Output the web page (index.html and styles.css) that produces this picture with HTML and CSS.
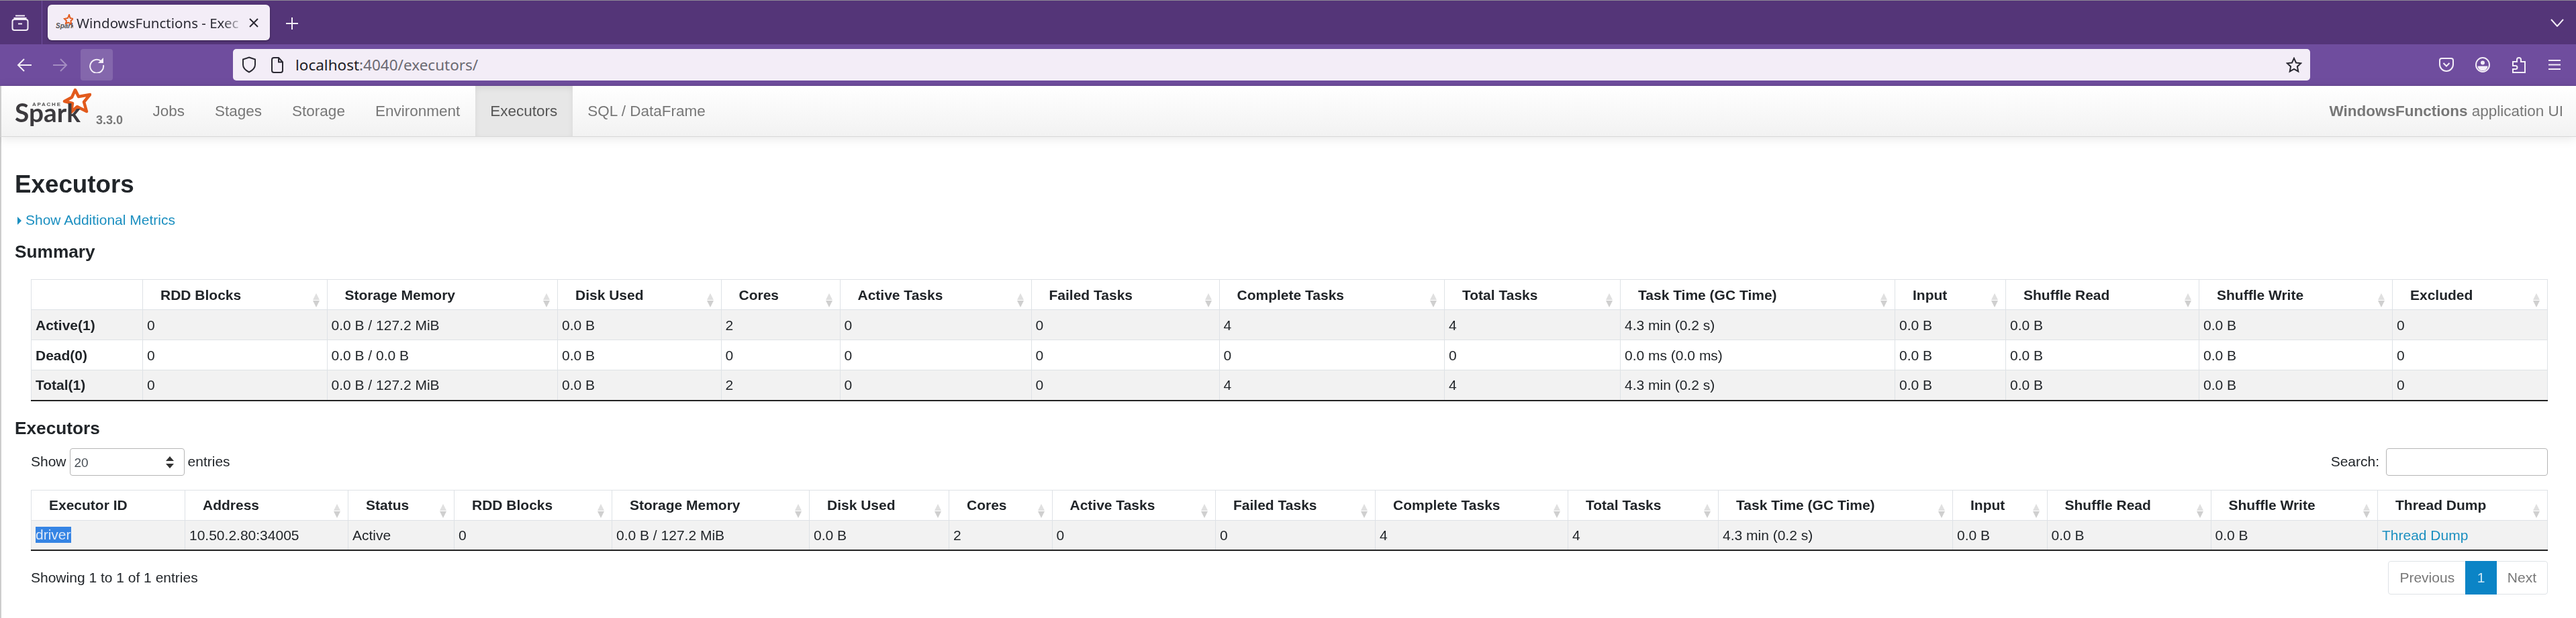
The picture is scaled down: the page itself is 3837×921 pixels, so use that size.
FILE: index.html
```html
<!DOCTYPE html>
<html lang="en">
<head>
    <meta charset="UTF-8">
    <title>WindowsFunctions - Executors</title>
    <link rel="stylesheet" href="styles.css">
</head>
<body>
<header class="browser">
    <div class="tabbar">
        <div class="tabs-btn">
            <svg width="26" height="24" viewBox="0 0 26 24" fill="none" stroke="#f3edf7" stroke-width="2"><path d="M6 1.500h14M3.500 5h19"/><rect x="1.500" y="7" width="23" height="16" rx="3"/><path d="M10 13.500h6"/></svg>
        </div>
        <div class="tab">
            <svg class="favicon" width="26" height="26" viewBox="0 0 26 26"><polygon points="20,1 21.500,6 26,7 22.500,10 23,15 19,12.500 15,14 16,10 13,7 18,6" fill="none" stroke="#e25a1c" stroke-width="2"/><text x="0" y="21" class="favicon-text">Spark</text></svg>
            <span class="tab-title">WindowsFunctions - Exec</span>
            <svg width="14" height="14" viewBox="0 0 14 14" stroke="#2b2a33" stroke-width="2"><path d="M1 1l12 12M13 1L1 13"/></svg>
        </div>
        <svg class="new-tab" width="18" height="18" viewBox="0 0 18 18" stroke="#f3edf7" stroke-width="2"><path d="M9 0v18M0 9h18"/></svg>
        <svg class="tabs-menu" width="20" height="12" viewBox="0 0 20 12" fill="none" stroke="#f3edf7" stroke-width="2"><path d="M1 1l9 10 9-10"/></svg>
    </div>
    <div class="toolbar">
        <div class="tool">
            <svg width="22" height="20" viewBox="0 0 22 20" fill="none" stroke="#f3edf7" stroke-width="2"><path d="M22 10H2M11 1l-9 9 9 9"/></svg>
        </div>
        <div class="tool tool-disabled">
            <svg width="22" height="20" viewBox="0 0 22 20" fill="none" stroke="#f3edf7" stroke-width="2"><path d="M0 10h20M11 1l9 9-9 9"/></svg>
        </div>
        <div class="tool tool-active">
            <svg width="24" height="24" viewBox="0 0 24 24" fill="none" stroke="#f3edf7" stroke-width="2"><path d="M19 6.500A10 10 0 1 0 22 12"/><path d="M14 9h8V1z" fill="#f3edf7" stroke="none"/></svg>
        </div>
        <div class="urlbar">
            <svg width="22" height="25" viewBox="0 0 22 25" fill="none" stroke="#2b2a33" stroke-width="2"><path d="M11 1.500l9 3v8c0 5.500-4 8.500-9 11-5-2.500-9-5.500-9-11v-8z"/></svg>
            <svg width="18" height="24" viewBox="0 0 18 24" fill="none" stroke="#2b2a33" stroke-width="2"><path d="M4 1h7l6 6.500V20a3 3 0 0 1-3 3H4a3 3 0 0 1-3-3V4a3 3 0 0 1 3-3zM11 1v6.500h6"/></svg>
            <span class="url"><span class="url-host">localhost</span>:4040/executors/</span>
            <svg width="24" height="24" viewBox="0 0 26 26" fill="none" stroke="#2b2a33" stroke-width="2.200"><path d="M13 2l3.300 7.200 7.700.9-5.700 5.300 1.500 7.800L13 19.300 6.200 23.200l1.500-7.800L2 10.100l7.700-.9z"/></svg>
        </div>
        <div class="toolbar-icons">
            <svg width="22" height="21" viewBox="0 0 22 21" fill="none" stroke="#f3edf7" stroke-width="2"><path d="M4 1h14a3 3 0 0 1 3 3v6c0 5.500-4.500 10-10 10S1 15.500 1 10V4a3 3 0 0 1 3-3z"/><path d="M6.500 8l4.500 4.500L15.500 8"/></svg>
            <svg width="22" height="23" viewBox="0 0 22 23" fill="none" stroke="#f3edf7" stroke-width="2"><ellipse cx="11" cy="11.500" rx="10" ry="10.500"/><circle cx="11" cy="8.500" r="3" fill="#f3edf7" stroke="none"/><path d="M3.500 13.500h15a7.500 7 0 0 1-15 0z" fill="#f3edf7" stroke="none"/></svg>
            <svg width="22" height="24" viewBox="0 0 22 24" fill="none" stroke="#f3edf7" stroke-width="2"><path d="M2 23v-5h4a2.500 2.500 0 0 0 0-5H2V7h6V4a3 3 0 0 1 6 0v3h6v16z"/></svg>
            <svg width="20" height="17" viewBox="0 0 20 17" fill="none" stroke="#f3edf7" stroke-width="2"><path d="M1 2h18M1 8.500h18M1 15h18"/></svg>
        </div>
    </div>
</header>

<nav class="navbar">
    <div class="brand">
        <svg class="logo" width="114" height="60" viewBox="0 0 114 60">
            <polygon points="90,3 95,13 112,10 103,21 107,35 93,28 84,36 86,23 74,20 85,14" fill="#fff" stroke="#e25a1c" stroke-width="4.500" stroke-linejoin="round"/>
            <text x="26" y="27" class="logo-apache" textLength="42">APACHE</text>
            <text x="0" y="51" class="logo-spark" textLength="98" lengthAdjust="spacingAndGlyphs">Spark</text>
        </svg>
        <span class="version">3.3.0</span>
    </div>
    <ul class="nav-list">
        <li><a href="#">Jobs</a></li>
        <li><a href="#">Stages</a></li>
        <li><a href="#">Storage</a></li>
        <li><a href="#">Environment</a></li>
        <li class="active"><a href="#">Executors</a></li>
        <li><a href="#">SQL / DataFrame</a></li>
    </ul>
    <span class="app-name"><strong>WindowsFunctions</strong> application UI</span>
</nav>

<main class="content">
    <h3>Executors</h3>
    <a class="toggle" href="#"><span class="arrow-right"></span>Show Additional Metrics</a>

    <h4>Summary</h4>
    <div class="indent">
        <table class="summary-table">
            <thead>
            <tr>
                <th class="blank"></th>
                <th class="sorting">RDD Blocks</th>
                <th class="sorting">Storage Memory</th>
                <th class="sorting">Disk Used</th>
                <th class="sorting">Cores</th>
                <th class="sorting">Active Tasks</th>
                <th class="sorting">Failed Tasks</th>
                <th class="sorting">Complete Tasks</th>
                <th class="sorting">Total Tasks</th>
                <th class="sorting">Task Time (GC Time)</th>
                <th class="sorting">Input</th>
                <th class="sorting">Shuffle Read</th>
                <th class="sorting">Shuffle Write</th>
                <th class="sorting">Excluded</th>
            </tr>
            </thead>
            <tbody>
            <tr class="odd">
                <td><b>Active(1)</b></td><td>0</td><td>0.0 B / 127.2 MiB</td><td>0.0 B</td><td>2</td><td>0</td><td>0</td><td>4</td><td>4</td><td>4.3 min (0.2 s)</td><td>0.0 B</td><td>0.0 B</td><td>0.0 B</td><td>0</td>
            </tr>
            <tr>
                <td><b>Dead(0)</b></td><td>0</td><td>0.0 B / 0.0 B</td><td>0.0 B</td><td>0</td><td>0</td><td>0</td><td>0</td><td>0</td><td>0.0 ms (0.0 ms)</td><td>0.0 B</td><td>0.0 B</td><td>0.0 B</td><td>0</td>
            </tr>
            <tr class="odd">
                <td><b>Total(1)</b></td><td>0</td><td>0.0 B / 127.2 MiB</td><td>0.0 B</td><td>2</td><td>0</td><td>0</td><td>4</td><td>4</td><td>4.3 min (0.2 s)</td><td>0.0 B</td><td>0.0 B</td><td>0.0 B</td><td>0</td>
            </tr>
            </tbody>
        </table>
    </div>

    <h4 class="second">Executors</h4>
    <div class="indent">
        <div class="controls">
            <label class="length">Show
                <span class="fake-select">20
                    <span class="select-arrows"></span>
                </span>
                entries</label>
            <label class="search">Search: <input type="search"></label>
        </div>
        <table class="executors-table">
            <thead>
            <tr>
                <th>Executor ID</th>
                <th class="sorting">Address</th>
                <th class="sorting">Status</th>
                <th class="sorting">RDD Blocks</th>
                <th class="sorting">Storage Memory</th>
                <th class="sorting">Disk Used</th>
                <th class="sorting">Cores</th>
                <th class="sorting">Active Tasks</th>
                <th class="sorting">Failed Tasks</th>
                <th class="sorting">Complete Tasks</th>
                <th class="sorting">Total Tasks</th>
                <th class="sorting">Task Time (GC Time)</th>
                <th class="sorting">Input</th>
                <th class="sorting">Shuffle Read</th>
                <th class="sorting">Shuffle Write</th>
                <th class="sorting">Thread Dump</th>
            </tr>
            </thead>
            <tbody>
            <tr class="odd">
                <td><span class="selected">driver</span></td><td>10.50.2.80:34005</td><td>Active</td><td>0</td><td>0.0 B / 127.2 MiB</td><td>0.0 B</td><td>2</td><td>0</td><td>0</td><td>4</td><td>4</td><td>4.3 min (0.2 s)</td><td>0.0 B</td><td>0.0 B</td><td>0.0 B</td><td><a href="#">Thread Dump</a></td>
            </tr>
            </tbody>
        </table>
        <div class="table-footer">
            <span>Showing 1 to 1 of 1 entries</span>
            <ul class="pagination">
                <li>Previous</li>
                <li class="current">1</li>
                <li>Next</li>
            </ul>
        </div>
    </div>
</main>
</body>
</html>
```

FILE: styles.css
```css
html, body {
    margin: 0;
    padding: 0;
    overflow: hidden;
}

body {
    font-family: "Liberation Sans", Arial, sans-serif;
    font-size: 21px;
    color: #212529;
    background-color: #fff;
    filter: blur(0.5px);
}

/* browser chrome */
.browser {
    font-family: "Noto Sans", sans-serif;
}

.tabbar {
    height: 66px;
    box-sizing: border-box;
    background-color: #543578;
    border-top: 1px solid #8f8a96;
    display: flex;
    align-items: center;
}

.tabs-btn {
    width: 63px;
    height: 100%;
    box-sizing: border-box;
    border-right: 1px solid #6f4d9e;
    display: flex;
    align-items: center;
    justify-content: center;
    padding-right: 3px;
}

.tab {
    width: 331px;
    height: 53px;
    margin-left: 8px;
    box-sizing: border-box;
    padding: 0 17px 0 12px;
    background-color: #f3edf7;
    border-radius: 6px;
    box-shadow: 0 1px 3px rgba(0, 0, 0, 0.4);
    display: flex;
    align-items: center;
    gap: 5px;
    color: #2b2a33;
}

.favicon-text {
    font-family: "Liberation Sans", sans-serif;
    font-size: 10px;
    font-weight: bold;
    font-style: italic;
    fill: #555;
}

.tab-title {
    flex: 1;
    font-size: 20.500px;
    white-space: nowrap;
    overflow: hidden;
    -webkit-mask-image: linear-gradient(to left, transparent 0, #000 36px);
    mask-image: linear-gradient(to left, transparent 0, #000 36px);
}

.new-tab {
    margin-left: 24px;
    margin-top: 3px;
}

.tabs-menu {
    margin-left: auto;
    margin-right: 18px;
}

.toolbar {
    height: 62px;
    box-sizing: border-box;
    background-color: #6f4d9e;
    padding: 7px 22px 7px 12px;
    display: flex;
    align-items: center;
    border-bottom: 1px solid #63448f;
}

.tool {
    width: 48px;
    height: 47px;
    margin-right: 6px;
    border-radius: 4px;
    display: flex;
    align-items: center;
    justify-content: center;
}

.tool-disabled svg {
    opacity: 0.4;
}

.tool-active {
    background-color: rgba(255, 255, 255, 0.15);
}

.urlbar {
    flex: 1;
    height: 47px;
    margin-left: 173px;
    box-sizing: border-box;
    padding: 0 12px 0 13px;
    background-color: #f3edf7;
    border-radius: 5px;
    display: flex;
    align-items: center;
    gap: 22px;
}

.url {
    flex: 1;
    margin-left: -4px;
    font-size: 22.500px;
    color: #6b6a72;
}

.url-host {
    color: #1e1d24;
}

.toolbar-icons {
    margin-left: 192px;
    display: flex;
    align-items: center;
    gap: 32px;
    flex: none;
}

/* spark navbar */
.navbar {
    height: 76px;
    box-sizing: border-box;
    background: linear-gradient(to bottom, #fff, #f2f2f2);
    border-bottom: 1px solid #d8d8d8;
    border-left: 2px solid #ccc;
    box-shadow: 0 2px 15px rgba(0, 0, 0, 0.1);
    display: flex;
    align-items: stretch;
    padding: 0 19px 0 20px;
    position: relative;
}

.brand {
    width: 183px;
    display: flex;
    align-items: flex-start;
    flex: none;
}

.logo {
    margin-top: 3px;
}

.logo-apache {
    font-family: "Liberation Sans", sans-serif;
    font-size: 8px;
    font-weight: bold;
    fill: #555;
}

.logo-spark {
    font-family: "Lato", sans-serif;
    font-size: 38px;
    font-weight: bold;
    fill: #3c3a3e;
}

.version {
    margin-left: 7px;
    margin-top: 41px;
    font-size: 18px;
    font-weight: bold;
    color: #777;
}

.nav-list {
    list-style: none;
    margin: 0;
    padding: 0;
    display: flex;
    flex: 1;
    font-size: 22.500px;
}

.nav-list li {
    display: flex;
    align-items: center;
}

.nav-list a {
    padding: 0 22.500px;
    color: #777;
    text-decoration: none;
}

.nav-list .active {
    background-color: #e7e7e7;
    box-shadow: inset 0 4px 8px rgba(0, 0, 0, 0.07);
}

.nav-list .active a {
    color: #555;
}

.app-name {
    align-self: center;
    font-size: 22.500px;
    color: #777;
}

/* page content */
.content {
    padding: 51px 42px 40px 20px;
    border-left: 2px solid #ccc;
}

h3 {
    margin: 0 0 18px;
    font-size: 36.750px;
    line-height: 40px;
    font-weight: bold;
}

h4 {
    margin: 16px 0 25px;
    font-size: 26.250px;
    line-height: 32px;
    font-weight: bold;
}

h4.second {
    margin: 24px 0 14px;
}

.toggle {
    display: block;
    height: 30px;
    line-height: 30px;
    padding-left: 4px;
    color: #1b8fc0;
    text-decoration: none;
}

.arrow-right {
    display: inline-block;
    margin-right: 6px;
    border-left: 6px solid #1b8fc0;
    border-top: 6.500px solid transparent;
    border-bottom: 6.500px solid transparent;
}

.indent {
    margin-left: 24px;
}

table {
    width: 100%;
    border-collapse: collapse;
    table-layout: fixed;
}

th, td {
    height: 45px;
    box-sizing: border-box;
    border: 1px solid #dee2e6;
    line-height: 21px;
    text-align: left;
    white-space: nowrap;
}

th {
    padding: 0 0 0 26px;
    position: relative;
}

th.blank {
    padding: 0;
}

td {
    padding: 0 6px;
}

.odd td {
    background-color: #f2f2f2;
}

tbody tr:last-child td {
    border-bottom: 2px solid #222;
}

td a {
    color: #1b8fc0;
    text-decoration: none;
}

/* column widths */
.summary-table th:nth-child(1) { width: 166px; }
.summary-table th:nth-child(2) { width: 274.500px; }
.summary-table th:nth-child(3) { width: 343.500px; }
.summary-table th:nth-child(4) { width: 243.500px; }
.summary-table th:nth-child(5) { width: 177px; }
.summary-table th:nth-child(6) { width: 285px; }
.summary-table th:nth-child(7) { width: 280px; }
.summary-table th:nth-child(8) { width: 335.500px; }
.summary-table th:nth-child(9) { width: 262px; }
.summary-table th:nth-child(10) { width: 409px; }
.summary-table th:nth-child(11) { width: 165px; }
.summary-table th:nth-child(12) { width: 288px; }
.summary-table th:nth-child(13) { width: 288px; }

.executors-table th:nth-child(1) { width: 229px; }
.executors-table th:nth-child(2) { width: 243px; }
.executors-table th:nth-child(3) { width: 158px; }
.executors-table th:nth-child(4) { width: 235px; }
.executors-table th:nth-child(5) { width: 294px; }
.executors-table th:nth-child(6) { width: 208px; }
.executors-table th:nth-child(7) { width: 153.500px; }
.executors-table th:nth-child(8) { width: 243.500px; }
.executors-table th:nth-child(9) { width: 238px; }
.executors-table th:nth-child(10) { width: 287px; }
.executors-table th:nth-child(11) { width: 224px; }
.executors-table th:nth-child(12) { width: 349px; }
.executors-table th:nth-child(13) { width: 140.500px; }
.executors-table th:nth-child(14) { width: 244px; }
.executors-table th:nth-child(15) { width: 248.500px; }

/* sort arrows */
th.sorting::before,
th.sorting::after {
    content: "";
    position: absolute;
    right: 11px;
    border-left: 5px solid transparent;
    border-right: 5px solid transparent;
}

th.sorting::before {
    top: 20px;
    border-bottom: 10px solid #e0e0e0;
}

th.sorting::after {
    top: 31px;
    border-top: 10px solid #cfcfcf;
}

.selected {
    display: inline-block;
    background-color: #3584e4;
    color: #dfe9f7;
    line-height: 24px;
}

.controls {
    height: 41px;
    margin-bottom: 21px;
    display: flex;
    justify-content: space-between;
    align-items: center;
}

.length {
    display: flex;
    align-items: center;
    gap: 5px;
}

.fake-select {
    width: 171px;
    height: 41px;
    box-sizing: border-box;
    padding: 3px 28px 0 6px;
    border: 1px solid #b5b5b5;
    border-radius: 4px;
    font-size: 19px;
    display: flex;
    align-items: center;
    justify-content: space-between;
    color: #495057;
    position: relative;
}

.select-arrows::before,
.select-arrows::after {
    content: "";
    position: absolute;
    right: 15px;
    border-left: 6px solid transparent;
    border-right: 6px solid transparent;
}

.select-arrows::before {
    top: 11px;
    border-bottom: 7px solid #333;
}

.select-arrows::after {
    top: 22px;
    border-top: 7px solid #333;
}

.search {
    display: flex;
    align-items: center;
    gap: 10px;
}

.search input {
    width: 241px;
    height: 41px;
    box-sizing: border-box;
    border: 1px solid #b5b5b5;
    border-radius: 4px;
    background-color: #fff;
}

.table-footer {
    margin-top: 15px;
    display: flex;
    justify-content: space-between;
    align-items: center;
}

.pagination {
    list-style: none;
    margin: 0;
    padding: 0;
    height: 50px;
    display: flex;
    border: 1px solid #dee2e6;
    border-radius: 4px;
    box-sizing: border-box;
    color: #777;
}

.pagination li {
    padding: 0 16px;
    line-height: 48px;
}

.pagination .current {
    margin: -1px 0;
    padding: 1px 17.500px;
    background-color: #0b84c6;
    color: #cfe8f7;
}
```
